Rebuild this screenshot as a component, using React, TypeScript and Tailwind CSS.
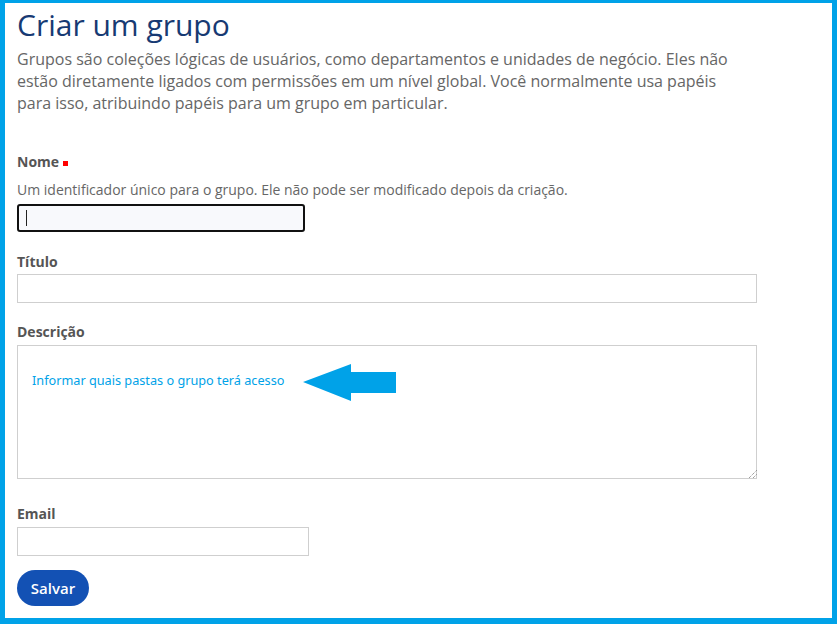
import React from 'react';

const font = { fontFamily: '"Open Sans", "Liberation Sans", sans-serif' };

export default function App() {
  return (
    <div
      className="relative w-[837px] h-[624px] bg-white border-[#00a2e8] border-l-[5px] border-t-[3px] border-r-[5px] border-b-[6px] overflow-hidden"
      style={font}
    >
      <div className="pl-[12px] pt-[2px]">
        <h1 className="text-[30px] leading-[40px] text-[#173a73] font-normal">Criar um grupo</h1>
        <p className="mt-[3px] text-[16px] leading-[22px] text-[#666]">
          Grupos são coleções lógicas de usuários, como departamentos e unidades de negócio. Eles não
          <br />
          estão diretamente ligados com permissões em um nível global. Você normalmente usa papéis
          <br />
          para isso, atribuindo papéis para um grupo em particular.
        </p>

        <div className="mt-[38px]">
          <div className="flex items-center gap-[4px] text-[14px] leading-[20px] font-bold text-[#555]">
            Nome <span className="w-[5px] h-[5px] bg-[#ff0000] mt-[2px]" />
          </div>
          <div className="mt-[8px] text-[14px] leading-[20px] text-[#666]">
            Um identificador único para o grupo. Ele não pode ser modificado depois da criação.
          </div>
          <div className="mt-[4px] w-[288px] h-[28px] border-2 border-[#111] rounded-[3px] bg-[#f8f9fc] flex items-center pl-[7px]">
            <span className="w-px h-[16px] bg-[#222]" />
          </div>
        </div>

        <div className="mt-[20px]">
          <div className="text-[14px] leading-[20px] font-bold text-[#555]">Título</div>
          <div className="mt-[2px] w-[740px] h-[29px] border border-[#cfcfcf]" />
        </div>

        <div className="mt-[19px]">
          <div className="text-[14px] leading-[20px] font-bold text-[#555]">Descrição</div>
          <div className="relative mt-[3px] w-[740px] h-[134px] border border-[#cfcfcf]">
            <div
              className="absolute left-[14px] top-[25px] text-[#00a2e8]"
              style={{ fontFamily: '"Noto Sans", sans-serif', fontSize: '12.7px' }}
            >
              Informar quais pastas o grupo terá acesso
            </div>
            <svg className="absolute left-[731px] top-[124px]" width="8" height="8" viewBox="0 0 8 8">
              <path d="M0 8 L8 0 M4 8 L8 4" stroke="#777" strokeWidth="1" strokeDasharray="1 1" />
            </svg>
          </div>
        </div>

        <div className="mt-[25px]">
          <div className="text-[14px] leading-[20px] font-bold text-[#555]">Email</div>
          <div className="mt-[3px] w-[292px] h-[29px] border border-[#cfcfcf]" />
        </div>

        <button className="mt-[14px] h-[36px] w-[72px] rounded-full bg-[#1351b4] text-white text-[15px] font-semibold">
          Salvar
        </button>
      </div>

      {/* annotation arrow */}
      <svg className="absolute left-[298px] top-[360px]" width="95" height="40" viewBox="0 0 95 40">
        <polygon points="0,19 48,1 48,9 93,9 93,30 48,30 48,38" fill="#00a2e8" />
      </svg>
    </div>
  );
}
